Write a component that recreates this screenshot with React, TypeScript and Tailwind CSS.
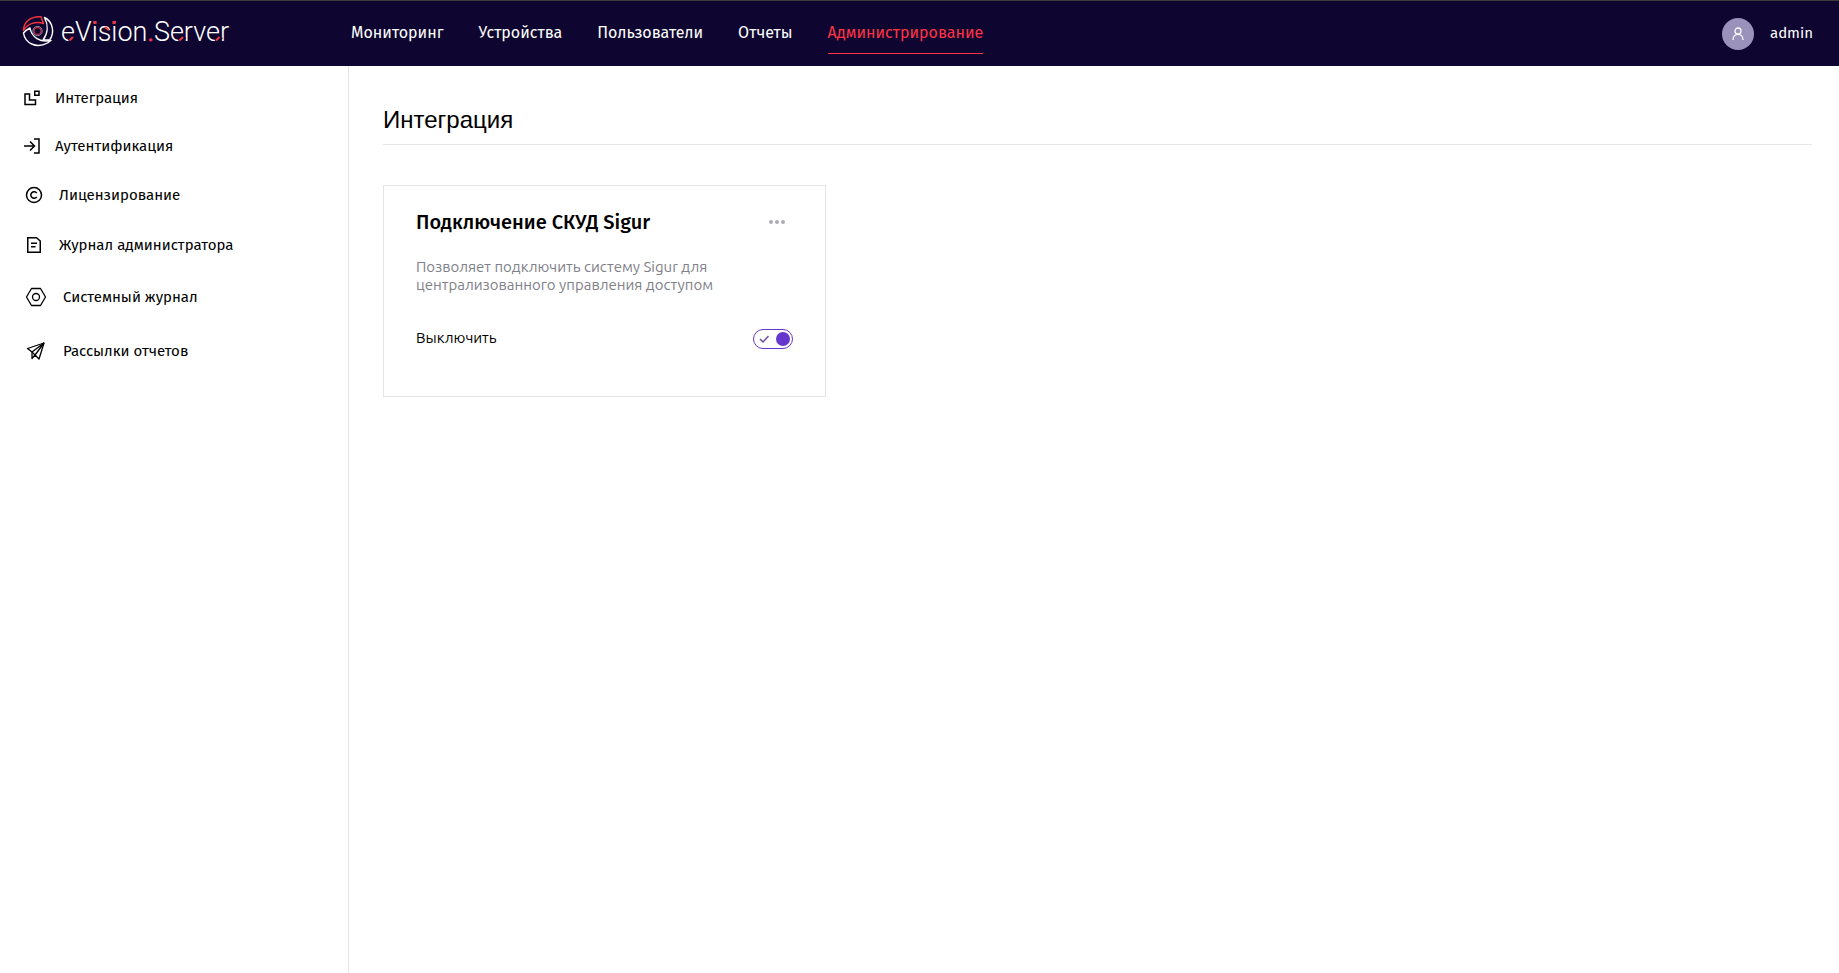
import React, { useState } from 'react';

const NAV_ITEMS = ['Мониторинг', 'Устройства', 'Пользователи', 'Отчеты', 'Администрирование'];

const Logo: React.FC = () => (
  <svg className="block" width="216" height="32" viewBox="0 0 216 32" fill="none" role="img" aria-label="eVision.Server">
    <g strokeWidth="1.4" strokeLinejoin="round">
      <path d="M1.500 15.500C1.500 7 9 1 19 1.800L21.500 8.500C14 6 5.500 8.500 1.500 15.500Z" stroke="#f5333f" />
      <path d="M22.500 2.500C31 6.500 33 18 27.500 25L21 25C26 18.500 26.500 10 22.500 2.500Z" stroke="#fff" />
      <path d="M1.500 18C3 28 14 34 25.500 28L29 25.500C18 28 9.500 22 8 13C5 14.500 3 16 1.500 18Z" stroke="#fff" />
      <circle cx="15.500" cy="16" r="4.600" stroke="#b9b4cc" strokeWidth="0.800" />
      <circle cx="15.500" cy="16" r="3.400" stroke="#c02c44" strokeWidth="1.100" />
    </g>
    <text x="39" y="26" fontSize="27" fontWeight="300" fontFamily="Roboto, sans-serif" fill="#fff">
      eVision<tspan fill="#f5333f" stroke="#f5333f" strokeWidth="1">.</tspan>Server
    </text>
    {/* red terminals of the letters */}
    <g stroke="#0e0630" strokeWidth="5">
      <path d="M47.500 26.500L52.500 21.500M157.500 26.500L162.500 21.500M194 26.500L199 21.500" />
    </g>
    <g stroke="#f5333f" strokeWidth="2">
      <path d="M47.500 25.500L51 22M157.500 25.500L161 22M194 25.500L197.500 22M83 12L86.500 15" />
      <path d="M71.500 7.500H74.500M90.500 7.500H93.500" strokeWidth="3" />
    </g>
  </svg>
);

const IntegrationIcon: React.FC = () => (
  <svg width="16" height="16" viewBox="0 0 16 16" fill="none" stroke="currentColor" strokeWidth="1.500">
    <path d="M1 4H5.500V10H11.500V14.500H1Z" />
    <path d="M10.750 1.250H15V5.250H10.750Z" />
  </svg>
);

const AuthIcon: React.FC = () => (
  <svg width="16" height="16" viewBox="0 0 16 16" fill="none" stroke="currentColor" strokeWidth="1.500">
    <path d="M0 8H10.500M6 3.500L10.500 8L6 12.500M10 1H15V15H10" />
  </svg>
);

const LicenseIcon: React.FC = () => (
  <svg width="20" height="20" viewBox="0 0 20 20" fill="none" stroke="currentColor" strokeWidth="1.500">
    <circle cx="10" cy="10" r="7.500" />
    <path d="M12.700 8.200A3.200 3.200 0 1 0 12.700 11.800" />
  </svg>
);

const JournalIcon: React.FC = () => (
  <svg width="20" height="20" viewBox="0 0 20 20" fill="none" stroke="currentColor" strokeWidth="1.500">
    <path d="M3.750 2.750H12.500L16.250 6V17.250H3.750Z" />
    <path d="M7 8.250H13M7 11.750H11.500" />
  </svg>
);

const SystemIcon: React.FC = () => (
  <svg width="24" height="24" viewBox="0 0 24 24" fill="none" stroke="currentColor" strokeWidth="1.300">
    <path d="M7.500 3.500H16.500L21.500 12L16.500 20.500H7.500L2.500 12Z" strokeLinejoin="round" />
    <circle cx="12" cy="12" r="3.500" />
  </svg>
);

const MailingIcon: React.FC = () => (
  <svg width="24" height="24" viewBox="0 0 24 24" fill="none" stroke="currentColor" strokeWidth="1.300" strokeLinejoin="round">
    <path d="M20 4L3.500 9.500L8 13L8 19.500L11 16L15 20Z" />
    <path d="M20 4L8 13M20 4L11 16L8 13" />
  </svg>
);

const SIDEBAR_ITEMS = [
  { title: 'Интеграция', Icon: IntegrationIcon },
  { title: 'Аутентификация', Icon: AuthIcon },
  { title: 'Лицензирование', Icon: LicenseIcon },
  { title: 'Журнал администратора', Icon: JournalIcon },
  { title: 'Системный журнал', Icon: SystemIcon },
  { title: 'Рассылки отчетов', Icon: MailingIcon },
];

const Header: React.FC = () => (
  <header className="flex h-[66px] items-center border-t border-[#3c3c3c] bg-[#0e0630] text-white">
    <a href="#" className="w-[351px] pb-[5px] pl-[22px]">
      <Logo />
    </a>
    <nav className="flex gap-[35px] text-[16px] leading-5">
      {NAV_ITEMS.map((item) => (
        <a
          key={item}
          href="#"
          className={
            item === 'Администрирование'
              ? 'border-b border-[#ff3344] pb-[10px] pt-[10px] text-[#ff3344]'
              : 'border-b border-transparent pb-[10px] pt-[10px]'
          }
        >
          {item}
        </a>
      ))}
    </nav>
    <button type="button" className="ml-auto mr-[26px] flex items-center gap-4 text-[15px]">
      <span className="flex size-8 items-center justify-center rounded-full bg-[#9b92bb]">
        <svg width="16" height="16" viewBox="0 0 16 16" fill="none" stroke="#fff" strokeWidth="1.300">
          <circle cx="8" cy="5" r="3" />
          <path d="M3 14C3 6.500 13 6.500 13 14" />
        </svg>
      </span>
      admin
    </button>
  </header>
);

const Sidebar: React.FC = () => (
  <aside className="w-[349px] shrink-0 border-r border-[#e5e5e5] pl-6 pt-[23px]">
    <nav className="flex flex-col gap-[30px] text-[15px] leading-[18px]">
      {SIDEBAR_ITEMS.map(({ title, Icon }) => (
        <a key={title} href="#" className="flex items-center gap-[15px]">
          <Icon />
          {title}
        </a>
      ))}
    </nav>
  </aside>
);

const IntegrationCard: React.FC = () => {
  const [enabled, setEnabled] = useState(true);

  return (
    <section className="mt-10 w-[443px] border border-[#e5e5e5] px-8 pb-[47px] pt-6">
      <div className="flex items-center justify-between">
        <h2 className="text-[20px] font-medium leading-6">Подключение СКУД Sigur</h2>
        <button type="button" aria-label="Меню" className="flex gap-[2px] pr-2">
          <span className="size-1 rounded-full bg-[#adadb8]" />
          <span className="size-1 rounded-full bg-[#adadb8]" />
          <span className="size-1 rounded-full bg-[#adadb8]" />
        </button>
      </div>
      <p className="mt-6 font-['Ubuntu','Noto_Sans',sans-serif] text-[15px] leading-[18px] text-[#808088]">
        Позволяет подключить систему Sigur для централизованного управления доступом
      </p>
      <label className="mt-[33px] flex items-end justify-between font-['Ubuntu','Noto_Sans',sans-serif] text-[15px] leading-[22px]">
        Выключить
        <span className="relative">
          <input
            type="checkbox"
            role="switch"
            checked={enabled}
            onChange={() => setEnabled(!enabled)}
            className="peer block h-5 w-10 appearance-none rounded-full border border-[#6637cc]"
          />
          <span className="pointer-events-none absolute left-[3px] top-[3px] size-[14px] rounded-full bg-[#6637cc] peer-checked:left-[23px]" />
          <svg className="pointer-events-none absolute left-[6px] top-[5px] hidden peer-checked:block" width="10" height="10" viewBox="0 0 10 10" fill="none" stroke="#6b4a9e" strokeWidth="1.500">
            <path d="M1 5L4 8L9.500 2" />
          </svg>
        </span>
      </label>
    </section>
  );
};

export default function App() {
  return (
    <div className="flex min-h-screen flex-col bg-white font-['Fira_Sans','Noto_Sans',sans-serif] text-black">
      <Header />
      <div className="flex grow">
        <Sidebar />
        <main className="grow pl-[34px] pr-[27px] pt-10">
          <h1 className="border-b border-[#e5e5e5] pb-[10px] font-['Liberation_Sans',sans-serif] text-[24px] leading-7">
            Интеграция
          </h1>
          <IntegrationCard />
        </main>
      </div>
    </div>
  );
}
